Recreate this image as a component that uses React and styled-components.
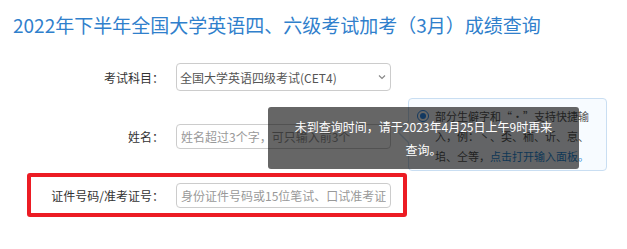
import styled, { createGlobalStyle } from "styled-components";

const GlobalStyle = createGlobalStyle`
  html, body {
    margin: 0;
    padding: 0;
    background: #fff;
  }
  body {
    font-family: "Noto Sans CJK SC", "Noto Sans", sans-serif;
    color: #333;
  }
  * { box-sizing: border-box; }
`;

const Page = styled.div`
  position: relative;
  width: 627px;
  height: 249px;
  overflow: hidden;
  padding: 11px 0 0 13px;
`;

const Title = styled.h1`
  margin: 0;
  font-size: 19px;
  line-height: 28px;
  font-weight: 400;
  color: #3080cc;
  white-space: nowrap;
`;

const Form = styled.div`
  display: flex;
  flex-direction: column;
  gap: 15px;
  width: 380px;
  margin: 16px 0 0 14px;
`;

const Row = styled.div`
  position: relative;
  display: flex;
  align-items: center;
  height: 44px;
  border: 4px solid ${(p) => (p.$highlight ? "#ec1c24" : "transparent")};
  border-radius: 3px;
`;

const Label = styled.label`
  width: 133px;
  text-align: right;
  font-size: 12px;
  color: #333;
  white-space: nowrap;
  margin-right: 12px;
`;

const SelectWrap = styled.div`
  position: relative;
  width: 215px;
  height: 28px;
`;

const Select = styled.select`
  appearance: none;
  width: 100%;
  height: 100%;
  border: 1px solid #ccc;
  border-radius: 4px;
  background: #fff;
  padding: 0 20px 0 3px;
  font-family: inherit;
  font-size: 12px;
  color: #555;
  outline: none;
`;

const Chevron = styled.svg`
  position: absolute;
  right: 5px;
  top: 11px;
  pointer-events: none;
`;

const Input = styled.input`
  width: 215px;
  height: 25px;
  border: 1px solid #ccc;
  border-radius: 4px;
  padding: 0 4px;
  font-family: inherit;
  font-size: 12px;
  color: #555;
  outline: none;
  &::placeholder {
    color: #999;
  }
`;

const Popover = styled.div`
  position: absolute;
  left: 377px;
  top: -20px;
  width: 199px;
  display: flex;
  align-items: flex-start;
  gap: 6px;
  padding: 7px 16px 4px 8px;
  border: 1px solid #c9def2;
  border-radius: 4px;
  background: #f7fbff;
  &::before,
  &::after {
    content: "";
    position: absolute;
    width: 0;
    height: 0;
    border-style: solid;
  }
  &::before {
    top: 22px;
    left: -12px;
    border-width: 11px 11px 11px 0;
    border-color: transparent #c9def2 transparent transparent;
  }
  &::after {
    top: 23px;
    left: -10px;
    border-width: 10px 10px 10px 0;
    border-color: transparent #fff transparent transparent;
  }
`;

const Radio = styled.span`
  flex: none;
  width: 12px;
  height: 12px;
  margin-top: 4px;
  border: 1px solid #2d8cf0;
  border-radius: 50%;
  background: #fff;
  display: flex;
  align-items: center;
  justify-content: center;
  &::after {
    content: "";
    width: 6px;
    height: 6px;
    border-radius: 50%;
    background: #2d8cf0;
  }
`;

const HintText = styled.p`
  margin: 0;
  font-size: 11px;
  line-height: 20px;
  color: #555;
`;

const Quote = styled.span`
  display: inline-block;
  width: 1em;
  text-align: ${(p) => p.$align};
`;

const Link = styled.a`
  color: #2a8ad6;
  text-decoration: none;
  cursor: pointer;
`;

const Toast = styled.div`
  position: absolute;
  left: 268px;
  top: 107px;
  width: 311px;
  padding: 8px 24px;
  border-radius: 3px;
  background: rgba(0, 0, 0, 0.6);
  color: #fff;
  font-size: 12px;
  line-height: 23px;
  text-align: center;
`;

export default function App() {
  return (
    <Page lang="zh-CN">
      <GlobalStyle />
      <Title>2022年下半年全国大学英语四、六级考试加考（3月）成绩查询</Title>
      <Form>
        <Row>
          <Label>考试科目：</Label>
          <SelectWrap>
            <Select defaultValue="CET4">
              <option value="CET4">全国大学英语四级考试(CET4)</option>
              <option value="CET6">全国大学英语六级考试(CET6)</option>
            </Select>
            <Chevron width="8" height="6" viewBox="0 0 8 6">
              <path d="M1 1.5 L4 4.5 L7 1.5" fill="none" stroke="#888" strokeWidth="1.2" />
            </Chevron>
          </SelectWrap>
        </Row>
        <Row>
          <Label>姓名：</Label>
          <Input placeholder="姓名超过3个字，可只输入前3个" />
          <Popover>
            <Radio />
            <HintText>
              部分生僻字和<Quote $align="right">“</Quote>·<Quote $align="left">”</Quote>支持快捷输入，例：丶、奀、栭、䜣、恴、垖、仝等，
              <Link>点击打开输入面板。</Link>
            </HintText>
          </Popover>
        </Row>
        <Row $highlight>
          <Label>证件号码/准考证号：</Label>
          <Input placeholder="身份证件号码或15位笔试、口试准考证号" />
        </Row>
      </Form>
      <Toast>未到查询时间，请于2023年4月25日上午9时再来查询。</Toast>
    </Page>
  );
}
